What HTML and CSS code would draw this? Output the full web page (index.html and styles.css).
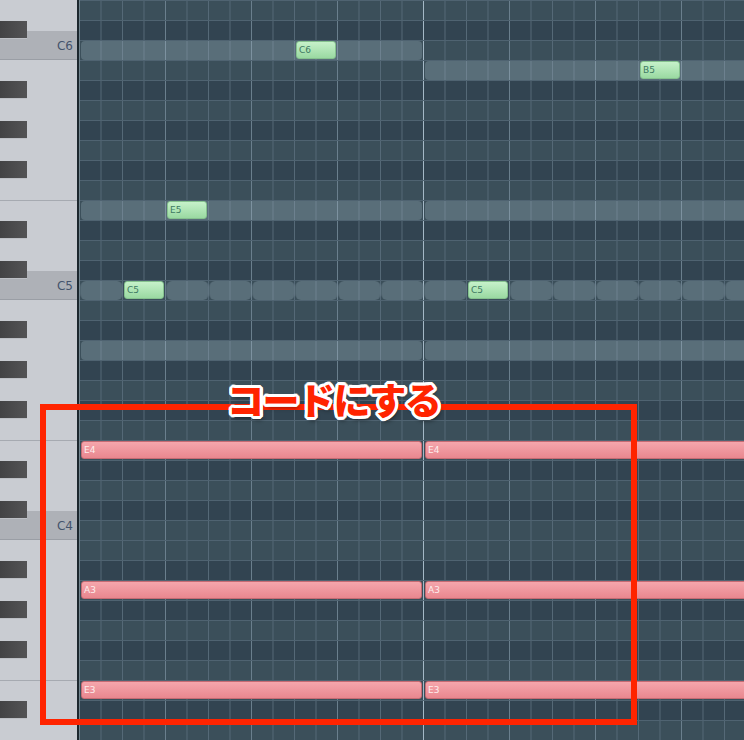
FILE: index.html
```html
<!DOCTYPE html>
<html lang="ja">
<head>
  <meta charset="UTF-8" />
  <meta name="viewport" content="width=device-width, initial-scale=1.0" />
  <title>Piano Roll</title>
  <link rel="stylesheet" href="styles.css">
</head>
<body>
  <div class="roll">
    <!-- Piano keyboard on the left -->
    <div class="keys">
      <div class="white" style="height:31px"></div>
      <div class="white c-key"><span>C6</span></div>
      <div class="white" style="height:140px"></div>
      <div class="white e-key" style="height:71px"></div>
      <div class="white c-key"><span>C5</span></div>
      <div class="white" style="height:140px"></div>
      <div class="white e-key" style="height:71px"></div>
      <div class="white c-key"><span>C4</span></div>
      <div class="white" style="height:140px"></div>
      <div class="white e-key" style="height:60px"></div>
      <!-- Black keys sit over the white ones, one slot per row -->
      <div class="black-layer" id="black-layer"></div>
    </div>
    <div class="divider"></div>
    <!-- Note grid -->
    <div class="grid" id="grid"></div>

    <!-- Annotation over the chord -->
    <div class="callout"></div>
    <div class="callout-title">コードにする</div>
  </div>

  <script>
    var TOP_NOTE = 86;   // D6 on the first row
    var ROWS = 37;
    var STEP = 21.5;     // one 16th step in px
    var BLACK = [1, 3, 6, 8, 10];

    // midi, step, length, kind, label
    var notes = [
      [84, 0, 16, 'ghost'], [83, 16, 16, 'ghost'],
      [76, 0, 16, 'ghost'], [76, 16, 16, 'ghost'],
      [69, 0, 16, 'ghost'], [69, 16, 16, 'ghost'],
      [84, 10, 2, 'green', 'C6'],
      [83, 26, 2, 'green', 'B5'],
      [76, 4, 2, 'green', 'E5'],
      [72, 2, 2, 'green', 'C5'],
      [72, 18, 2, 'green', 'C5'],
      [64, 0, 16, 'red', 'E4'], [64, 16, 16, 'red', 'E4'],
      [57, 0, 16, 'red', 'A3'], [57, 16, 16, 'red', 'A3'],
      [52, 0, 16, 'red', 'E3'], [52, 16, 16, 'red', 'E3']
    ];
    // repeating short ghost notes on the C5 row
    for (var s = 0; s < 32; s += 2) {
      if (s !== 2 && s !== 18) notes.unshift([72, s, 2, 'ghost short']);
    }

    var grid = document.getElementById('grid');
    var blackLayer = document.getElementById('black-layer');
    var rowEls = {};

    for (var i = 0; i < ROWS; i++) {
      var midi = TOP_NOTE - i;
      var isBlack = BLACK.indexOf(midi % 12) !== -1;

      var row = document.createElement('div');
      row.className = 'row' + (isBlack ? ' dark' : '');
      grid.appendChild(row);
      rowEls[midi] = row;

      var slot = document.createElement('div');
      slot.className = 'slot';
      if (isBlack) {
        var key = document.createElement('div');
        key.className = 'black';
        slot.appendChild(key);
      }
      blackLayer.appendChild(slot);
    }

    notes.forEach(function (n) {
      var el = document.createElement('div');
      var short = n[3] === 'ghost short';
      el.className = 'note ' + n[3];
      el.style.left = (n[1] * STEP + (short ? 0 : 1)) + 'px';
      el.style.width = (n[2] * STEP - (short ? 0 : 3)) + 'px';
      if (n[4]) el.textContent = n[4];
      rowEls[n[0]].appendChild(el);
    });
  </script>
</body>
</html>
```

FILE: styles.css
```css
body {
  margin: 0;
  background-color: #324451;
  font-family: 'DejaVu Sans', 'Liberation Sans', sans-serif;
}
.roll {
  position: relative;
  display: flex;
  width: 744px;
  height: 740px;
  overflow: hidden;
}
/* Piano keyboard */
.keys {
  position: relative;
  width: 77px;
  flex: none;
  display: flex;
  flex-direction: column;
  background-color: #c9ccd2;
}
.white {
  flex: none;
  box-sizing: border-box;
  background-color: #c9ccd2;
}
.e-key {
  border-top: 1px solid #a6aab1;
}
.c-key {
  height: 29px;
  display: flex;
  justify-content: flex-end;
  align-items: flex-end;
  padding: 0 4px 7px 0;
  background-color: #aeb1b7;
  border-bottom: 1px solid #9a9ea5;
  font-size: 12px;
  color: #45546c;
  line-height: 12px;
}
.black-layer {
  position: absolute;
  top: 0;
  left: 0;
  right: 0;
  display: flex;
  flex-direction: column;
}
.slot {
  height: 20px;
  flex: none;
  padding-top: 1px;
  box-sizing: border-box;
}
.black {
  width: 27px;
  height: 18px;
  background: linear-gradient(90deg, #434345, #535355);
  border-bottom: 1px solid #bcbfc5;
  box-sizing: border-box;
}
.divider {
  width: 3px;
  flex: none;
  background: linear-gradient(90deg, #1c272e 0 2px, #71858f 2px);
}
/* Note grid */
.grid {
  flex: 1;
  display: flex;
  flex-direction: column;
}
.row {
  position: relative;
  height: 20px;
  flex: none;
  box-sizing: border-box;
  border-top: 1px solid #4f6371;
  background:
    linear-gradient(90deg, #a4b8c6 0 1px, transparent 1px) -1px 0 / 344px 100%,
    linear-gradient(90deg, #6a7f8d 0 1px, transparent 1px) -1px 0 / 86px 100%,
    linear-gradient(90deg, #556977 0 1px, transparent 1px) -1px 0 / 21.5px 100%,
    #3b4f5a;
}
.row.dark {
  background:
    linear-gradient(90deg, #a4b8c6 0 1px, transparent 1px) -1px 0 / 344px 100%,
    linear-gradient(90deg, #6a7f8d 0 1px, transparent 1px) -1px 0 / 86px 100%,
    linear-gradient(90deg, #556977 0 1px, transparent 1px) -1px 0 / 21.5px 100%,
    #324451;
}
.note {
  position: absolute;
  top: 0;
  height: 18px;
  box-sizing: border-box;
  border-radius: 3px;
  padding-left: 2px;
  font-size: 9px;
  line-height: 16px;
  white-space: nowrap;
  overflow: hidden;
}
.note.ghost {
  height: 19px;
  border-radius: 4px;
  background-color: rgba(190, 210, 222, 0.24);
}
.note.short {
  border-left: 1px solid rgba(40, 55, 65, 0.18);
  border-right: 1px solid rgba(40, 55, 65, 0.18);
  border-radius: 6px;
}
.note.green {
  background: linear-gradient(#c6f1ca, #9ad9a2);
  border: 1px solid #85c28e;
  color: #3e7a62;
}
.note.red {
  background: linear-gradient(#f5a6ac, #e9878f);
  border: 1px solid #c66b73;
  color: #fdeeee;
}
/* Red annotation box and title */
.callout {
  position: absolute;
  left: 40px;
  top: 404px;
  width: 597px;
  height: 321px;
  box-sizing: border-box;
  border: 6px solid #ff2400;
}
.callout-title {
  position: absolute;
  left: 227px;
  top: 377px;
  font-family: 'Noto Sans CJK JP', sans-serif;
  font-weight: 900;
  font-size: 37px;
  line-height: 44px;
  letter-spacing: -1.5px;
  color: #ff2400;
  text-shadow:
    3px 0 #fff, -3px 0 #fff, 0 3px #fff, 0 -3px #fff,
    2px 2px #fff, -2px 2px #fff, 2px -2px #fff, -2px -2px #fff,
    3px 1px #fff, 3px -1px #fff, -3px 1px #fff, -3px -1px #fff,
    1px 3px #fff, -1px 3px #fff, 1px -3px #fff, -1px -3px #fff,
    2px 4px 4px rgba(0, 0, 0, 0.45);
}
```
